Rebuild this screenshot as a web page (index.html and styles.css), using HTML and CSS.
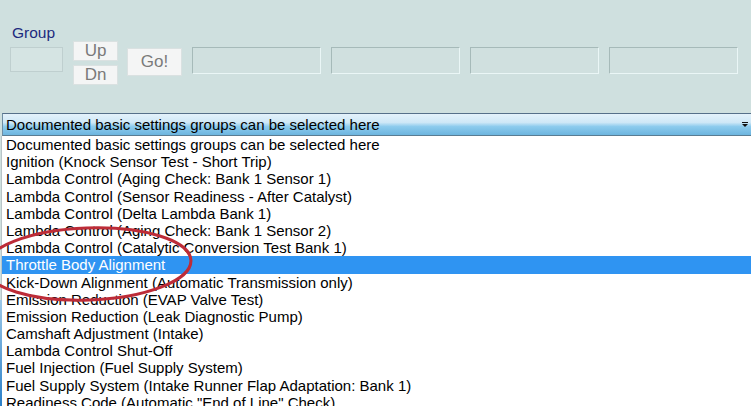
FILE: index.html
```html
<!DOCTYPE html>
<html>
<head>
<meta charset="utf-8">
<link rel="stylesheet" href="styles.css">
</head>
<body>
<div class="top">
  <div class="col-group">
    <div class="label">Group</div>
    <div class="group-input"></div>
  </div>
  <div class="col-updn">
    <div class="btn small">Up</div>
    <div class="btn small">Dn</div>
  </div>
  <div class="btn go">Go!</div>
  <div class="boxes">
    <div class="box"></div>
    <div class="box"></div>
    <div class="box"></div>
    <div class="box"></div>
  </div>
</div>
<div class="combo">
  <span class="combo-text">Documented basic settings groups can be selected here</span>
  <span class="arrow"></span>
</div>
<div class="list">
  <div class="item">Documented basic settings groups can be selected here</div>
  <div class="item">Ignition (Knock Sensor Test - Short Trip)</div>
  <div class="item">Lambda Control (Aging Check: Bank 1 Sensor 1)</div>
  <div class="item">Lambda Control (Sensor Readiness - After Catalyst)</div>
  <div class="item">Lambda Control (Delta Lambda Bank 1)</div>
  <div class="item">Lambda Control (Aging Check: Bank 1 Sensor 2)</div>
  <div class="item">Lambda Control (Catalytic Conversion Test Bank 1)</div>
  <div class="item selected">Throttle Body Alignment</div>
  <div class="item">Kick-Down Alignment (Automatic Transmission only)</div>
  <div class="item">Emission Reduction (EVAP Valve Test)</div>
  <div class="item">Emission Reduction (Leak Diagnostic Pump)</div>
  <div class="item">Camshaft Adjustment (Intake)</div>
  <div class="item">Lambda Control Shut-Off</div>
  <div class="item">Fuel Injection (Fuel Supply System)</div>
  <div class="item">Fuel Supply System (Intake Runner Flap Adaptation: Bank 1)</div>
  <div class="item">Readiness Code (Automatic "End of Line" Check)</div>
</div>
<div class="edge"></div>
<svg class="circle" width="751" height="406" viewBox="0 0 751 406">
  <ellipse cx="88" cy="264" rx="103" ry="36" transform="rotate(-2 88 264)" fill="none" stroke="#bd2c38" stroke-width="3"/>
</svg>
</body>
</html>
```
FILE: styles.css
```css
html, body {
  margin: 0;
  padding: 0;
}
body {
  width: 751px;
  height: 406px;
  overflow: hidden;
  background: #cfe0df;
  font-family: "Liberation Sans", Arial, sans-serif;
  position: relative;
}
.top {
  height: 113px;
  display: flex;
  align-items: flex-start;
  padding-left: 10px;
  box-sizing: border-box;
}
.col-group {
  padding-top: 24px;
  width: 53px;
}
.label {
  font-size: 15.5px;
  line-height: 18px;
  color: #1c2a7e;
  padding-left: 2px;
  margin-bottom: 5px;
}
.group-input {
  width: 53px;
  height: 25px;
  box-sizing: border-box;
  border: 1px solid #bfcfcf;
  background: #d5e4e3;
}
.col-updn {
  margin-left: 10px;
  margin-top: 41px;
  display: flex;
  flex-direction: column;
  gap: 4px;
}
.btn {
  box-sizing: border-box;
  background: #f4f5f5;
  border: 1px solid #dae1e1;
  color: #7a7a7a;
  font-size: 17px;
  display: flex;
  align-items: center;
  justify-content: center;
}
.small {
  width: 45px;
  height: 20px;
}
.go {
  margin-left: 9px;
  margin-top: 48px;
  width: 55px;
  height: 28px;
  font-size: 17px;
}
.boxes {
  margin-left: 10px;
  margin-top: 47px;
  display: flex;
  gap: 10px;
}
.box {
  width: 129px;
  height: 27px;
  box-sizing: border-box;
  border-top: 1px solid #a6bab9;
  border-left: 1px solid #a6bab9;
  border-bottom: 1px solid #eaf6f6;
  border-right: 1px solid #eaf6f6;
  background: #d0e0df;
}
.combo {
  margin-left: 2px;
  height: 23px;
  box-sizing: border-box;
  border-top: 1px solid #56708a;
  border-bottom: 1px solid #5a7c92;
  border-left: 1px solid #6f8ea4;
  background: linear-gradient(#e4f2fb 0%, #cfe8f7 40%, #8ccbed 60%, #6db5df 100%);
  display: flex;
  align-items: center;
  justify-content: space-between;
  padding-left: 3px;
  padding-right: 3px;
}
.combo-text {
  font-size: 15px;
  color: #000;
  line-height: 20px;
}
.arrow {
  width: 0;
  height: 0;
  border-left: 3px solid transparent;
  border-right: 3px solid transparent;
  border-top: 3px solid #111;
  position: relative;
  top: 1px;
}
.arrow::before {
  content: "";
  position: absolute;
  left: -3px;
  top: -5px;
  width: 6px;
  height: 1px;
  background: #111;
}
.list {
  margin-left: 1px;
  border-left: 1px solid #b8c4c8;
  background: #ffffff;
  height: 270px;
}
.item {
  font-size: 15px;
  line-height: 17.2px;
  height: 17.2px;
  padding-left: 4px;
  color: #000;
  white-space: nowrap;
}
.item.selected {
  background: #2f94f2;
  color: #ffffff;
}
.edge {
  position: absolute;
  left: 0;
  top: 300px;
  width: 2px;
  height: 106px;
  background: linear-gradient(#9cc8e8, #2a7fc8);
}
.circle {
  position: absolute;
  left: 0;
  top: 0;
  pointer-events: none;
}
```
